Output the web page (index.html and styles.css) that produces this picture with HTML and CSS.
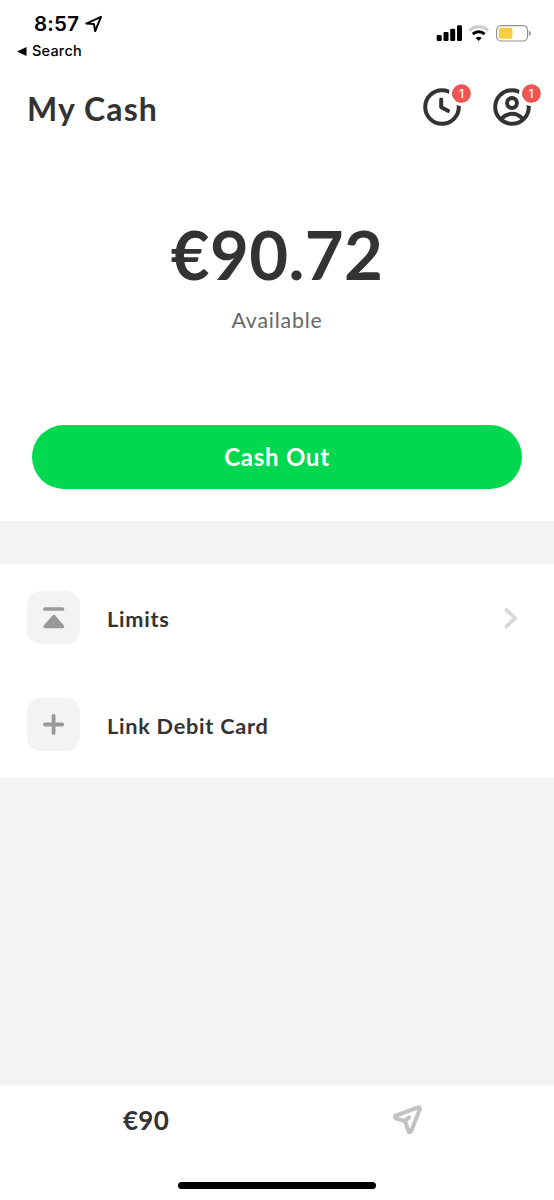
FILE: index.html
```html
<!DOCTYPE html>
<html lang="en">
<head>
<meta charset="utf-8">
<title>My Cash</title>
<link rel="stylesheet" href="styles.css">
</head>
<body>
<div class="screen">
  <header class="status">
    <div class="status-left">
      <div class="clock"><span class="time">8:57</span>
        <svg width="18" height="18" viewBox="0 0 18 18"><path d="M1.3 8.6 16 1.8 10.2 16 8.9 9Z" fill="none" stroke="#000" stroke-width="2" stroke-linejoin="round"/></svg>
      </div>
      <div class="back"><svg width="10" height="9" viewBox="0 0 10 9"><path d="M0 4.5 9.5 0V9Z"/></svg><span class="back-label">Search</span></div>
    </div>
    <svg class="status-icons" width="96" height="18" viewBox="436 24 96 18">
      <rect x="436.7" y="35" width="5" height="6" rx="1.2"/><rect x="443.5" y="32" width="5" height="9" rx="1.2"/><rect x="450.2" y="28.7" width="5" height="12.3" rx="1.2"/><rect x="457" y="25.3" width="5" height="15.7" rx="1.2"/>
      <path d="M469.3 30.6a13.5 13.5 0 0 1 18.8 0" fill="none" stroke="#ccc" stroke-width="3"/>
      <path d="M472.8 34.2a8.6 8.6 0 0 1 11.8 0" fill="none" stroke="#000" stroke-width="3"/>
      <path d="M475.7 38.1a4.3 4.3 0 0 1 6 0l-3 3Z"/>
      <rect x="496.6" y="25.6" width="31" height="15.4" rx="4.6" fill="#fff" stroke="#929292" stroke-width="1.2"/>
      <rect x="498.8" y="27.8" width="13.6" height="11" rx="2" fill="#f8cd3e"/>
      <path d="M529 30.8q2 .5 2 2.5t-2 2.5Z" fill="#929292"/>
    </svg>
  </header>

  <div class="title-bar">
    <h1 class="title">My Cash</h1>
    <div class="actions">
      <div class="action">
        <svg width="38" height="38" viewBox="0 0 38 38"><circle cx="19" cy="19" r="16.8"/><path d="M18.2 11.5V19.3L25 22.8"/></svg>
        <span class="badge">1</span>
      </div>
      <div class="action">
        <svg width="38" height="38" viewBox="0 0 38 38"><circle cx="19" cy="19" r="16.8"/><circle cx="19" cy="15" r="4.9"/><path d="M8.4 31C11.2 27.6 14.6 25.8 19 25.8S26.8 27.6 29.6 31"/></svg>
        <span class="badge">1</span>
      </div>
    </div>
  </div>

  <section class="balance">
    <div class="amount">€90.72</div>
    <div class="caption">Available</div>
    <button class="cash-out">Cash Out</button>
  </section>

  <nav class="options">
    <div class="option">
      <span class="tile"><svg width="54" height="54" viewBox="0 0 54 54"><path d="M18 18H35.5" stroke="#999" stroke-width="3.7" stroke-linecap="round"/><path d="M26.8 25.5 18 35.5H35.6Z" fill="#999" stroke="#999" stroke-width="3.4" stroke-linejoin="round"/></svg></span>
      <span class="option-label">Limits</span>
      <svg class="chevron" width="14" height="22" viewBox="0 0 14 22"><path d="M2.5 3 11 11.2 2.5 19.4" fill="none" stroke="#d8d8d8" stroke-width="3.8" stroke-linecap="round"/></svg>
    </div>
    <div class="option">
      <span class="tile"><svg width="54" height="54" viewBox="0 0 54 54"><path d="M18 26.5H35.2M26.6 17.9V35.1" stroke="#999" stroke-width="3.8" stroke-linecap="round"/></svg></span>
      <span class="option-label">Link Debit Card</span>
    </div>
  </nav>

  <footer class="tabs">
    <div class="tab tab-amount">€90</div>
    <div class="tab tab-send"><svg width="32" height="32" viewBox="0 0 32 32"><path d="M3.6 11.6Q2.2 13.6 4.4 14.6L13 17 16.6 27.4Q17.8 29.4 19.2 27.2L28 4.8Q28.2 2.8 26.2 3.3Z M13 17 17 13.4" fill="none" stroke="#c2c2c2" stroke-width="4" stroke-linejoin="round" stroke-linecap="round"/></svg></div>
    <div class="home-indicator"></div>
  </footer>
</div>
</body>
</html>
```
FILE: styles.css
```css
* { box-sizing: border-box; }
body { margin: 0; background: #fff; font-family: Lato, "Open Sans", sans-serif; color: #333; }
svg { display: block; flex: none; }
.screen { width: 554px; height: 1200px; display: flex; flex-direction: column; background: #f3f3f3; overflow: hidden; }
.status { height: 72px; background: #fff; display: flex; justify-content: space-between; padding: 12px 22px 0 17px; color: #000; font-family: Inter, sans-serif; }
.clock { display: flex; gap: 6px; align-items: center; height: 24px; padding-left: 17px; }
.time { font-size: 20.5px; font-weight: 600; line-height: 24px; letter-spacing: .2px; }
.back { display: flex; gap: 5px; align-items: center; height: 20px; margin-top: 5px; }
.back-label { font-size: 14.5px; font-weight: 500; line-height: 20px; letter-spacing: .2px; }
.status-icons { margin-top: 12px; }
.title-bar { height: 72px; background: #fff; display: flex; justify-content: space-between; align-items: center; padding: 0 24px 0 27px; }
.title { margin: 0; font-size: 32px; font-weight: 700; line-height: 40px; letter-spacing: 1.1px; padding-top: 1px; }
.actions { display: flex; gap: 31.5px; margin-right: -.5px; }
.action { position: relative; margin-top: -2px; }
.action svg { fill: none; stroke: #333; stroke-width: 4; stroke-linecap: round; stroke-linejoin: round; }
.badge { position: absolute; left: 26px; top: -7px; width: 25px; height: 25px; border: 3px solid #fff; border-radius: 50%; background: #f05552; background-clip: padding-box; color: #fff; font: 500 12px/19px Inter, sans-serif; text-align: center; }
.balance { height: 377px; background: #fff; display: flex; flex-direction: column; align-items: center; padding: 70px 32px 0; }
.amount { font-size: 67px; font-weight: 700; line-height: 80px; letter-spacing: .4px; }
.caption { margin-top: 11px; font-size: 21.3px; line-height: 30px; color: #666; letter-spacing: .8px; }
.cash-out { margin-top: 90px; width: 490px; height: 64px; border: 0; border-radius: 32px; background: #00d94f; color: #fff; font: 700 24px/64px Lato, sans-serif; letter-spacing: .75px; padding: 0; }
.options { margin-top: 43px; height: 214px; background: #fff; }
.option { height: 107px; display: flex; align-items: center; padding: 0 36px 0 27px; }
.tile { width: 53px; height: 53px; border-radius: 14px; background: #f3f3f3; }
.option-label { margin-left: 27px; font-size: 21.7px; font-weight: 700; line-height: 30px; letter-spacing: .75px; padding-top: 3px; }
.chevron { margin-left: auto; }
.tabs { margin-top: auto; height: 115px; background: #fff; display: grid; grid-template: 70px 1fr / 292px 230px; }
.tab { display: flex; align-items: center; justify-content: center; }
.tab-amount { font-size: 26px; font-weight: 700; letter-spacing: .2px; }
.tab-send { padding-left: 2px; }
.home-indicator { grid-column: 1 / -1; width: 198px; height: 7px; border-radius: 4px; background: #000; margin: 27px 0 0 178px; }
```
